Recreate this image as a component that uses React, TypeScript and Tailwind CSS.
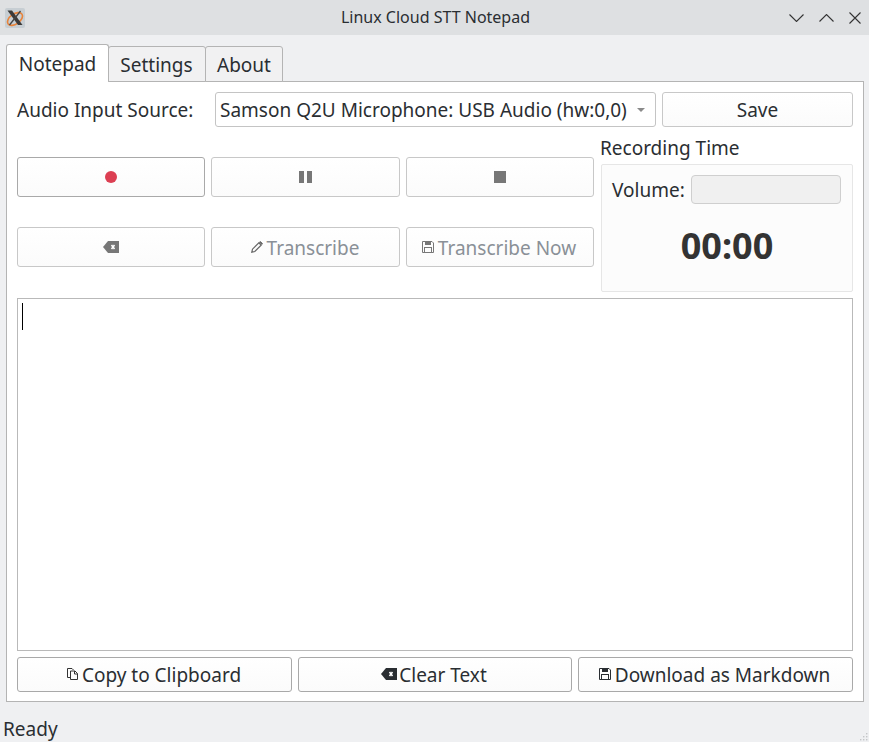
import React from "react";

const Btn = ({ children, cls = "", dark = false }: { children: React.ReactNode; cls?: string; dark?: boolean }) => (
  <button className={`flex items-center justify-center rounded-[3px] border bg-gradient-to-b from-[#ffffff] to-[#fbfbfb] ${dark ? "border-[#a9a9a9]" : "border-[#c8c8c8]"} ${cls}`}>
    {children}
  </button>
);

const T = ({ children, cls = "" }: { children: React.ReactNode; cls?: string }) => (
  <span className={`whitespace-nowrap pt-[2px] ${cls}`}>{children}</span>
);

const Backspace = ({ c, w, h, cls = "" }: { c: string; w: number; h: number; cls?: string }) => (
  <svg width={w} height={h} viewBox="0 0 16 12" className={cls}>
    <path d="M5 0H16V12H5L0 6Z" fill={c} />
    <path d="M8.5 4L11.5 8M11.5 4L8.5 8" stroke="#fff" strokeWidth="1.6" />
  </svg>
);

const Disk = ({ c, cls = "" }: { c: string; cls?: string }) => (
  <svg width="12" height="12" viewBox="0 0 12 12" fill="none" className={cls}>
    <path d="M.5.5H10L11.5 2V11.5H.5Z" stroke={c} />
    <rect x="3" y="0.5" width="6" height="3.5" fill={c} />
    <rect x="2.5" y="6.5" width="7" height="5" stroke={c} />
  </svg>
);

const Pencil = () => (
  <svg width="12" height="12" viewBox="0 0 12 12" fill="none">
    <path d="M.8 11.2L1.5 8.2L7.8 1.9L10.1 4.2L3.8 10.5Z" stroke="#666" strokeWidth="1.2" />
    <path d="M8.4 1.2L9.4.4L11.6 2.6L10.8 3.6Z" fill="#666" stroke="#666" strokeWidth=".8" />
  </svg>
);

const Copy = ({ cls = "" }: { cls?: string }) => (
  <svg width="12" height="12" viewBox="0 0 12 12" fill="none" stroke="#333" className={cls}>
    <path d="M3.5 9.5H.5V.5H5L6.5 2" />
    <path d="M3.5 3H8L10.5 5.5V11.5H3.5Z" />
    <path d="M7.5 3V6H10.5" />
  </svg>
);

export default function App() {
  return (
    <div className="flex h-[742px] w-[869px] flex-col overflow-hidden bg-[#eff0f2] text-[19px] leading-none text-[#2a2e32] [font-family:'Noto_Sans',sans-serif]">
      <header className="grid h-[35px] shrink-0 grid-cols-[1fr_auto_1fr] items-center bg-[#dee0e2] pl-[5px] pr-[8px]">
        <svg width="20" height="20" viewBox="0 0 20 20" className="mt-[1px]">
          <rect width="20" height="20" rx="2" fill="#c7ced3" />
          <ellipse cx="10" cy="11" rx="8.5" ry="5" fill="none" stroke="#e8833a" strokeWidth="1.6" transform="rotate(-35 10 11)" />
          <path d="M2.5 2.5H7L17.5 17H13Z" fill="#3a3a3a" />
          <path d="M15.5 3L4.5 17" stroke="#444" strokeWidth="1.3" />
        </svg>
        <span className="mb-[2px] pl-[5px] text-[16px] text-[#2a2e32]">Linux Cloud STT Notepad</span>
        <div className="flex items-center justify-end gap-[15px]">
          <svg width="15" height="8" viewBox="0 0 15 8" fill="none" stroke="#333" strokeWidth="1.1"><path d="M.5.5L7.5 7.5L14.5.5" /></svg>
          <svg width="15" height="8" viewBox="0 0 15 8" fill="none" stroke="#333" strokeWidth="1.1"><path d="M.5 7.5L7.5.5L14.5 7.5" /></svg>
          <svg width="12" height="12" viewBox="0 0 12 12" fill="none" stroke="#333" strokeWidth="1.1"><path d="M.5.5L11.5 11.5M11.5.5L.5 11.5" /></svg>
        </div>
      </header>

      <main className="mx-[6px] mt-[9px] flex w-[858px] flex-col">
        <nav className="relative z-10 flex h-[38px] items-end">
          <div className="flex h-[38px] w-[103px] items-center justify-center rounded-t-[3px] border border-b-0 border-[#b4b4b4] bg-white pt-[2px]">Notepad</div>
          <div className="-ml-px flex h-[36px] w-[98px] items-center justify-center rounded-t-[3px] border border-[#b4b4b4] bg-[#f1f1f2] pr-[1px] pt-[3px]">Settings</div>
          <div className="-ml-px flex h-[36px] w-[78px] items-center justify-center rounded-t-[3px] border border-[#b4b4b4] bg-[#f1f1f2] pt-[3px]">About</div>
        </nav>

        <section className="-mt-px flex h-[621px] flex-col border border-[#b4b4b4] bg-white px-[10px] pt-[10px]">
          <div className="flex h-[35px] gap-[6px]">
            <label className="flex w-[192px] items-center pt-[2px]">Audio Input Source:</label>
            <div className="flex w-[441px] items-center justify-between rounded-[3px] border border-[#c4c4c4] bg-white pl-[4px] pr-[10px]">
              <T>Samson Q2U Microphone: USB Audio (hw:0,0)</T>
              <svg width="8" height="4" viewBox="0 0 8 4"><path d="M0 0H8L4 4Z" fill="#8a8a8a" /></svg>
            </div>
            <Btn cls="w-[191px]"><T>Save</T></Btn>
          </div>

          <div className="mt-[6px] flex h-[159px] gap-[7px]">
            <div className="grid w-[577px] grid-cols-[188px_189px_188px] content-center gap-x-[6px] gap-y-[30px] pb-[1px]">
              <Btn dark cls="h-[40px]">
                <span className="size-[12px] rounded-full bg-[#dc3f52]" />
              </Btn>
              <Btn cls="h-[40px] pr-[1px]">
                <span className="flex gap-[3px]">
                  <span className="h-[12px] w-[5px] bg-[#777]" />
                  <span className="h-[12px] w-[5px] bg-[#777]" />
                </span>
              </Btn>
              <Btn cls="h-[40px]">
                <span className="size-[12px] bg-[#777]" />
              </Btn>
              <Btn cls="h-[40px]">
                <Backspace c="#777" w={16} h={12} />
              </Btn>
              <Btn cls="h-[40px] gap-[4px] pr-[1px] text-[#8a9097]">
                <Pencil />
                <T>Transcribe</T>
              </Btn>
              <Btn cls="h-[40px] gap-[4px] pr-[2px] text-[#8a9097]">
                <Disk c="#777" />
                <T>Transcribe Now</T>
              </Btn>
            </div>
            <div className="flex w-[252px] flex-col">
              <div className="-ml-[1px] flex h-[31px] items-center">Recording Time</div>
              <div className="flex h-[128px] flex-col rounded-[2px] border border-[#e6e6e6] bg-[#fcfcfc] pl-[10px] pr-[11px] pt-[10px]">
                <div className="flex items-center gap-[6px]">
                  <T>Volume:</T>
                  <div className="h-[29px] flex-1 rounded-[4px] border border-[#cfcfcf] bg-[#f0f0f0]" />
                </div>
                <div className="mt-[24px] pl-[1px] text-center text-[36px] font-bold text-[#333]">00:00</div>
              </div>
            </div>
          </div>

          <div className="mt-[6px] h-[353px] border border-[#b9b9b9] bg-white pl-[4px] pt-[4px]">
            <div className="h-[27px] w-px bg-black" />
          </div>

          <div className="mt-[6px] grid h-[35px] grid-cols-[275px_274px_275px] gap-[6px]">
            <Btn dark cls="gap-[3px] pr-[1px]"><Copy cls="mb-[1px]" /><T>Copy to Clipboard</T></Btn>
            <Btn dark cls="gap-[2px] pr-[2px]"><Backspace c="#2a2e32" w={16} h={12} cls="mb-[1px]" /><T>Clear Text</T></Btn>
            <Btn dark cls="gap-[4px] pr-[2px]"><Disk c="#2a2e32" cls="mb-[1px]" /><T>Download as Markdown</T></Btn>
          </div>
        </section>
      </main>

      <footer className="relative flex flex-1 items-center pl-[3px] pt-[14px]">
        Ready
        <svg width="10" height="10" viewBox="0 0 10 10" className="absolute bottom-0 right-0" fill="#c4c6c8">
          <rect x="7" y="1" width="1.4" height="1.4" /><rect x="4" y="4" width="1.4" height="1.4" /><rect x="7" y="4" width="1.4" height="1.4" /><rect x="1" y="7" width="1.4" height="1.4" /><rect x="4" y="7" width="1.4" height="1.4" /><rect x="7" y="7" width="1.4" height="1.4" />
        </svg>
      </footer>
    </div>
  );
}
